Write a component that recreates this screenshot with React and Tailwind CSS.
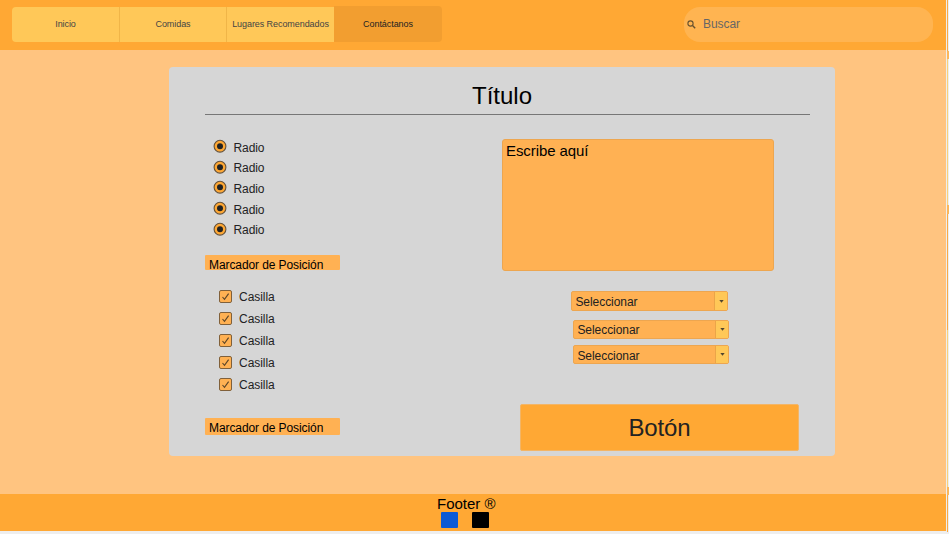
import React from "react";

const tabs = ["Inicio", "Comidas", "Lugares Recomendados"];

function Radio({ low }) {
  return (
    <label className="flex h-[20.6px] items-center">
      <svg width="14" height="14" viewBox="0 0 14 14" className="shrink-0">
        <circle cx="7" cy="7.2" r="5.9" fill="#ffa834" stroke="#64513a" strokeWidth="1.1" />
        <circle cx="7" cy="7.2" r="3" fill="#222" />
      </svg>
      <span className={"ml-[6.4px] text-[12px] leading-[14px] tracking-[-0.05px] " + (low ? "mt-[4px]" : "mt-[2px]")}>Radio</span>
    </label>
  );
}

function Casilla() {
  return (
    <label className="flex h-[21.9px] items-center">
      <svg width="13" height="13" viewBox="0 0 13 13" className="shrink-0">
        <rect x="0.5" y="0.5" width="12" height="12" rx="1.5" fill="#ffb153" stroke="#80603a" />
        <path d="M3.5 7l2 2.3L9.6 3.6" fill="none" stroke="#5c4528" strokeWidth="1.1" />
      </svg>
      <span className="ml-[7px] mt-[1px] text-[12px] leading-[14px] tracking-[-0.04px]">Casilla</span>
    </label>
  );
}

function Select({ className }) {
  return (
    <div className={"flex rounded-[2px] border border-[#eda650] bg-[#ffb153] " + className}>
      <span className="flex-1 pl-[3.4px] pt-[3px] text-[12px] leading-[14px] tracking-[-0.05px]">Seleccionar</span>
      <span className="flex w-[13px] items-center justify-center border-l border-[#eba548] bg-[#ffc858]">
        <svg width="5" height="3" viewBox="0 0 5 3">
          <path d="M0.3 0h4.4L2.5 2.8z" fill="#51452d" />
        </svg>
      </span>
    </div>
  );
}

export default function App() {
  return (
    <div className="flex h-[534px] w-[949px] overflow-hidden bg-[#eeeeee] font-['Liberation_Sans',Arial,sans-serif] text-[#222]">
      <div className="flex h-[531px] w-[946px] shrink-0 flex-col bg-[#ffc480]">
        <header className="flex h-[50px] shrink-0 items-start justify-between bg-[#ffa834] pl-3 pr-[13px] pt-[6px]">
          <nav className="flex h-9 w-[430px] text-[9px] tracking-[-0.07px]">
            {tabs.map((t, i) => (
              <a
                key={t}
                className={
                  "mt-px flex h-[35px] items-center justify-center whitespace-nowrap border-[#f0b548] bg-[#ffc858] text-[#444] " +
                  (i === 0 ? "w-[108px] rounded-l-[4px] border-r" : i === 1 ? "w-[107px] border-r" : "w-[107px]")
                }
              >
                {t}
              </a>
            ))}
            <a className="flex h-9 w-[108px] items-center justify-center rounded-r-[4px] bg-[#f29e30] pt-px text-[#222]">
              Contáctanos
            </a>
          </nav>
          <div className="mt-px flex h-[35px] w-[249px] items-center rounded-[16px] bg-[#ffb451] pl-[3px] text-[12px] text-[#666]">
            <svg width="9" height="9" viewBox="0 0 9 9" className="-mt-px">
              <circle cx="3.5" cy="3.5" r="2.6" fill="none" stroke="#66512f" strokeWidth="1.1" />
              <path d="M5.5 5.5L8.2 8.2" stroke="#66512f" strokeWidth="1.4" />
            </svg>
            <span className="-mt-[2px] ml-[7px] tracking-[-0.05px]">Buscar</span>
          </div>
        </header>

        <main className="flex flex-1 items-start pl-[169px] pt-[17px]">
          <section className="h-[389px] w-[666px] rounded-[4px] bg-[#d6d6d6] pl-9 pr-[25px]">
            <h1 className="h-[48px] border-b border-[#777] pr-[11px] pt-[15px] text-center text-[24px] leading-[28px] text-black">
              Título
            </h1>
            <div className="flex">
              <div className="w-[297px] shrink-0 pt-[21px]">
                <div className="pl-2">
                  {[0, 1, 2, 3, 4].map((n) => (
                    <Radio key={n} low={n === 0 || n === 2 || n === 3} />
                  ))}
                </div>
                <div className="mt-[16px] h-[15px] w-[135px] rounded-[1px] bg-[#ffb153] pl-1 pt-[3px] text-[12px] leading-[14px] tracking-[-0.09px] text-black">
                  Marcador de Posición
                </div>
                <div className="mt-[16px] pl-[14px]">
                  {[0, 1, 2, 3, 4].map((n) => (
                    <Casilla key={n} />
                  ))}
                </div>
                <div className="mt-[22.5px] h-[17.5px] w-[135px] rounded-[1px] bg-[#ffb153] pl-1 pt-[3px] text-[12px] leading-[14px] tracking-[-0.09px] text-black">
                  Marcador de Posición
                </div>
              </div>
              <div className="flex flex-col items-start pt-[24px]">
                <div className="h-[132px] w-[272px] rounded-[3px] border border-[#eda650] bg-[#ffb153] pl-[3px] pt-[2px] text-[15px] leading-[17px] tracking-[-0.08px] text-black">
                  Escribe aquí
                </div>
                <Select className="ml-[69px] mt-[20px] h-5 w-[157px]" />
                <Select className="ml-[71px] mt-[9px] h-[19px] w-[156px] [&>span:first-child]:pt-[2px]" />
                <Select className="ml-[71px] mt-[6px] h-[19px] w-[156px]" />
                <button className="ml-[18px] mt-[40px] h-[47px] w-[279px] rounded-[2px] border border-[#f3b566] bg-[#ffa834] pt-[1px] text-[24px] tracking-[-0.1px]">
                  Botón
                </button>
              </div>
            </div>
          </section>
        </main>

        <footer className="h-[37.5px] shrink-0 bg-[#ffa834] pl-[437px] pt-[2px] text-[15px] leading-[16px] text-black">
          Footer ®
          <div className="ml-1 flex gap-[14px]">
            <span className="h-4 w-[17px] rounded-[1px] bg-[#0c5ad6]" />
            <span className="h-4 w-[17px] rounded-[1px] bg-black" />
          </div>
        </footer>
      </div>
      <div className="ml-px flex w-[2px] flex-col items-start">
        <i className="h-[51px] w-px bg-[#fbab45]" />
        <i className="h-2 w-[2px] bg-[#fbb75c]" />
        <i className="h-[146px] w-px bg-[#fad27a]" />
        <i className="h-[9px] w-[2px] bg-[#fbb75c]" />
        <i className="h-[116px] w-px bg-[#fbab45]" />
        <i className="h-[157px] w-px bg-[#fad27a]" />
        <i className="h-2 w-[2px] bg-[#fbb75c]" />
        <i className="h-[37px] w-px bg-[#fbab45]" />
      </div>
    </div>
  );
}
